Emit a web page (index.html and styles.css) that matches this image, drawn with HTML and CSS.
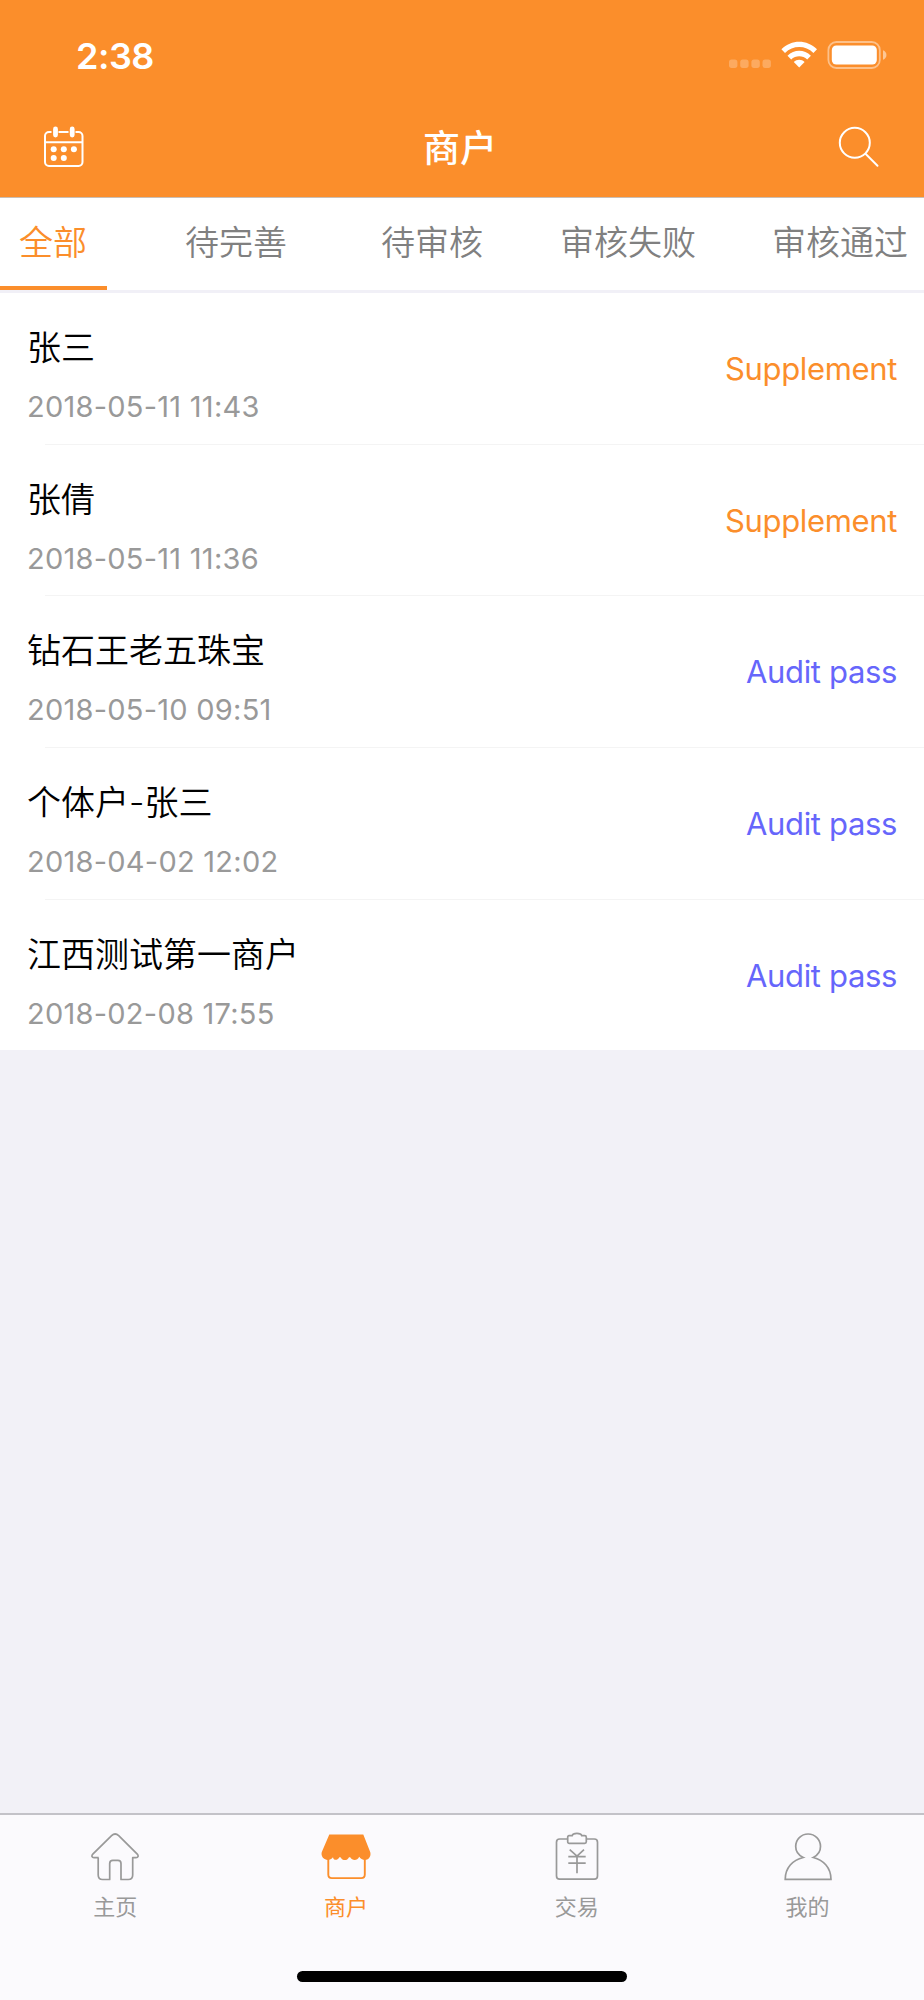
FILE: index.html
```html
<!DOCTYPE html>
<html lang="zh-CN">
<head>
<meta charset="utf-8">
<title>商户</title>
<link rel="stylesheet" href="styles.css">
</head>
<body>
<div class="app">
  <header class="header">
    <div class="status">
      <span class="time">2:38</span>
      <svg class="status-icons" width="160" height="30" viewBox="0 0 160 30" fill="#fff">
        <g opacity=".25"><rect x="0" y="19.5" width="8.4" height="8.4" rx="2.6"/><rect x="11.2" y="19.5" width="8.4" height="8.4" rx="2.6"/><rect x="22.4" y="19.5" width="8.4" height="8.4" rx="2.6"/><rect x="33.5" y="19.5" width="8.4" height="8.4" rx="2.6"/></g>
        <path d="M52.4 9.3C62.3-.9 78.1-.9 88 9.3L84.4 12.9C76.5 5 63.9 5 56 12.9Z"/>
        <path d="M58.5 15.7C65 9 75.4 9 81.9 15.7L78.2 19.4C73.7 15.1 66.7 15.1 62.2 19.4Z"/>
        <path d="M64.8 21.9C67.8 19 72.6 19 75.6 21.9L70.2 27.5Z"/>
        <rect x="99.4" y="2" width="51.4" height="26" rx="8" fill="none" stroke="#fff" stroke-opacity=".45" stroke-width="1.8"/>
        <rect x="102.8" y="5.4" width="45" height="19.2" rx="4.5"/>
        <path d="M154 10.3C158.6 12 158.6 18.200 154 19.700Z" opacity=".5"/>
      </svg>
    </div>
    <div class="navbar">
      <svg class="calendar" width="42" height="42" viewBox="0 0 42 42" fill="none" stroke="#fff" stroke-width="2">
        <path d="M8.500 6H6C3.800 6 2 7.800 2 10V36C2 38.200 3.800 40 6 40H35.500C37.700 40 39.500 38.200 39.500 36V10C39.500 7.800 37.700 6 35.500 6H32.500M15.500 6H25.500M2 16.200H39.500"/>
        <path d="M12.500 3V9M29.200 3V9" stroke-width="4.800" stroke-linecap="round"/>
        <g fill="#fff" stroke="none"><circle cx="10.700" cy="23.300" r="3"/><circle cx="20.800" cy="23.300" r="3"/><circle cx="30.900" cy="23.300" r="3"/><circle cx="10.700" cy="32" r="3"/><circle cx="20.800" cy="32" r="3"/></g>
      </svg>
      <h1 class="title">商户</h1>
      <svg class="search" width="42" height="42" viewBox="0 0 42 42" fill="none" stroke="#fff" stroke-width="2" stroke-linecap="round">
        <circle cx="16.800" cy="16.800" r="15"/><path d="M27.500 27.700L39.500 39.700"/>
      </svg>
    </div>
  </header>
  <nav class="filters">
    <a class="filter active">全部</a>
    <a class="filter">待完善</a>
    <a class="filter">待审核</a>
    <a class="filter">审核失败</a>
    <a class="filter">审核通过</a>
  </nav>
  <main class="list">
    <div class="row"><div class="info"><div class="name">张三</div><div class="date">2018-05-11 11:43</div></div><div class="state supplement">Supplement</div></div>
    <div class="row"><div class="info"><div class="name">张倩</div><div class="date">2018-05-11 11:36</div></div><div class="state supplement">Supplement</div></div>
    <div class="row"><div class="info"><div class="name">钻石王老五珠宝</div><div class="date">2018-05-10 09:51</div></div><div class="state pass">Audit pass</div></div>
    <div class="row"><div class="info"><div class="name">个体户-张三</div><div class="date">2018-04-02 12:02</div></div><div class="state pass">Audit pass</div></div>
    <div class="row"><div class="info"><div class="name">江西测试第一商户</div><div class="date">2018-02-08 17:55</div></div><div class="state pass">Audit pass</div></div>
  </main>
  <footer class="footer">
    <nav class="tabbar">
      <a class="tab">
        <svg width="50" height="50" viewBox="0 0 50 50" fill="none" stroke="currentColor" stroke-width="1.700" stroke-linejoin="round">
          <path d="M8.700 25.700H4C1.800 25.700 1.300 23.700 2.800 22.200L21.600 3.700C23.900 1.500 26.400 1.500 28.700 3.700L47.300 22.200C48.700 23.700 48.300 25.700 46 25.700H42.700V43C42.700 45.700 41 47.500 38.300 47.500H31V31.500C31 29.500 29.900 28.300 27.900 28.300H22.900C20.900 28.300 19.700 29.500 19.700 31.500V47.500H12.500C9.900 47.500 8.200 45.700 8.200 43V25.700"/>
        </svg>
        <span>主页</span>
      </a>
      <a class="tab current">
        <svg width="50" height="50" viewBox="0 0 50 50">
          <path d="M8.300 2.600H42.300L49.200 20C50.400 24 47.800 27.900 44 27.900C41.500 27.900 39.300 26.600 38.200 24.700C36.300 29 31.400 29 29.200 25.200H28C26.200 29 21.600 29 19.500 25.200H18.300C16.300 29 12.500 28.500 12 25.200C10.500 27 8.800 27.900 6.700 27.900C2.600 27.900-.4 24 .8 20Z" fill="currentColor"/>
          <path d="M7.300 26V42.500C7.300 44.700 8.700 46.100 10.900 46.100H40.200C42.400 46.100 43.800 44.700 43.800 42.500V26" fill="none" stroke="currentColor" stroke-width="1.900"/>
        </svg>
        <span>商户</span>
      </a>
      <a class="tab">
        <svg width="50" height="50" viewBox="0 0 50 50" fill="none" stroke="currentColor" stroke-width="1.700">
          <path d="M15.700 7H7.700C5.700 7 4.500 8.200 4.500 10.200V44C4.500 46 5.700 47.200 7.700 47.200H42.300C44.300 47.200 45.500 46 45.500 44V10.200C45.500 8.200 44.300 7 42.300 7H34.300"/>
          <path d="M17 3.600H20.200C21 .6 28.800.6 29.700 3.600H32.700C33.700 3.600 34.300 4.200 34.300 5.200V9.800C34.300 10.800 33.700 11.400 32.700 11.400H17.300C16.300 11.400 15.700 10.800 15.700 9.800V5.200C15.700 4.200 16.300 3.600 17 3.600Z"/>
          <path d="M17.700 17.700L25 24.200L32 17.700M16.300 24.700H33.700M16.300 31.200H33.700M25 24.200V41.300"/>
        </svg>
        <span>交易</span>
      </a>
      <a class="tab">
        <svg width="50" height="50" viewBox="0 0 50 50" fill="none" stroke="currentColor" stroke-width="1.700">
          <path d="M20.200 25.500C15.500 23.200 12.700 19.300 12.700 14.500C12.700 7.500 18.200 2 25.100 2C32 2 37.500 7.500 37.500 14.500C37.500 19.300 34.700 23.200 30.300 25.500C40.500 28 48 35.800 48 47.400H2.200C2.200 35.800 9.700 28 20.200 25.500Z"/>
        </svg>
        <span>我的</span>
      </a>
    </nav>
    <div class="home-indicator"></div>
  </footer>
</div>
</body>
</html>
```
FILE: styles.css
```css
* { box-sizing: border-box; }
body {
  margin: 0;
  font-family: Inter, "Noto Sans CJK SC", sans-serif;
  background: #f2f1f7;
}
.app {
  width: 924px;
  height: 2000px;
  display: flex;
  flex-direction: column;
}
.header {
  height: 198px;
  flex: none;
  background: #fb8e2b;
  border-bottom: 1px solid #c9beb4;
  color: #fff;
}
.status {
  height: 110px;
  display: flex;
  justify-content: space-between;
  padding: 40px 35px 0 76px;
}
.time {
  font-size: 36px;
  font-weight: 600;
  line-height: 32px;
  letter-spacing: -.5px;
}
.navbar {
  height: 87px;
  display: flex;
  align-items: center;
  justify-content: space-between;
  padding: 0 44px 13px 43px;
}
.title {
  margin: 0 3px 0 0;
  padding-top: 3px;
  font-size: 37px;
  line-height: 48px;
  font-weight: 500;
}
.filters {
  height: 95px;
  flex: none;
  display: flex;
  background: #fff;
  border-bottom: 3px solid #f1f0f7;
  font-size: 34px;
  line-height: 90px;
  color: #808080;
  white-space: nowrap;
}
.filter { font-weight: 350; margin-left: 77px; }
.filter:nth-child(2) { margin-left: 78px; }
.filter:nth-child(3) { margin-left: 94px; }
.filter:nth-child(5) { margin-left: 76px; }
.filter.active {
  width: 107px;
  margin-left: 0;
  padding-left: 19px;
  color: #fb8e2b;
  border-bottom: 4px solid #fb8e2b;
}
.list { flex: none; background: #fff; }
.row {
  height: 151.7px;
  display: flex;
  justify-content: space-between;
  padding: 33px 27px 0 27px;
  background: linear-gradient(#f4f4f4, #f4f4f4) 45px 100% / 100% 1px no-repeat;
}
.row:last-child { height: 150.2px; background: none; }
.name {
  font-size: 34px;
  line-height: 44px;
  font-weight: 350;
  color: #000;
}
.date {
  margin-top: 17px;
  font-size: 29px;
  line-height: 40px;
  letter-spacing: .25px;
  color: #999;
}
.state {
  padding-top: 23px;
  font-size: 31px;
  line-height: 40px;
  letter-spacing: -.35px;
}
.supplement { color: #fb8e2b; }
.pass { color: #6666fb; }
.footer {
  margin-top: auto;
  height: 187px;
  background: #fbfafd;
  border-top: 2px solid #c3c2c8;
  display: flex;
  flex-direction: column;
  align-items: center;
}
.tabbar {
  width: 100%;
  height: 156px;
  display: flex;
  padding-right: 1px;
}
.tab {
  flex: 1;
  display: flex;
  flex-direction: column;
  align-items: center;
  gap: 9px;
  padding-top: 17px;
  font-size: 22px;
  line-height: 32px;
  color: #999;
}
.tab.current { color: #fb8e2b; }
.home-indicator {
  width: 330px;
  height: 11px;
  border-radius: 6px;
  background: #000;
}
```
